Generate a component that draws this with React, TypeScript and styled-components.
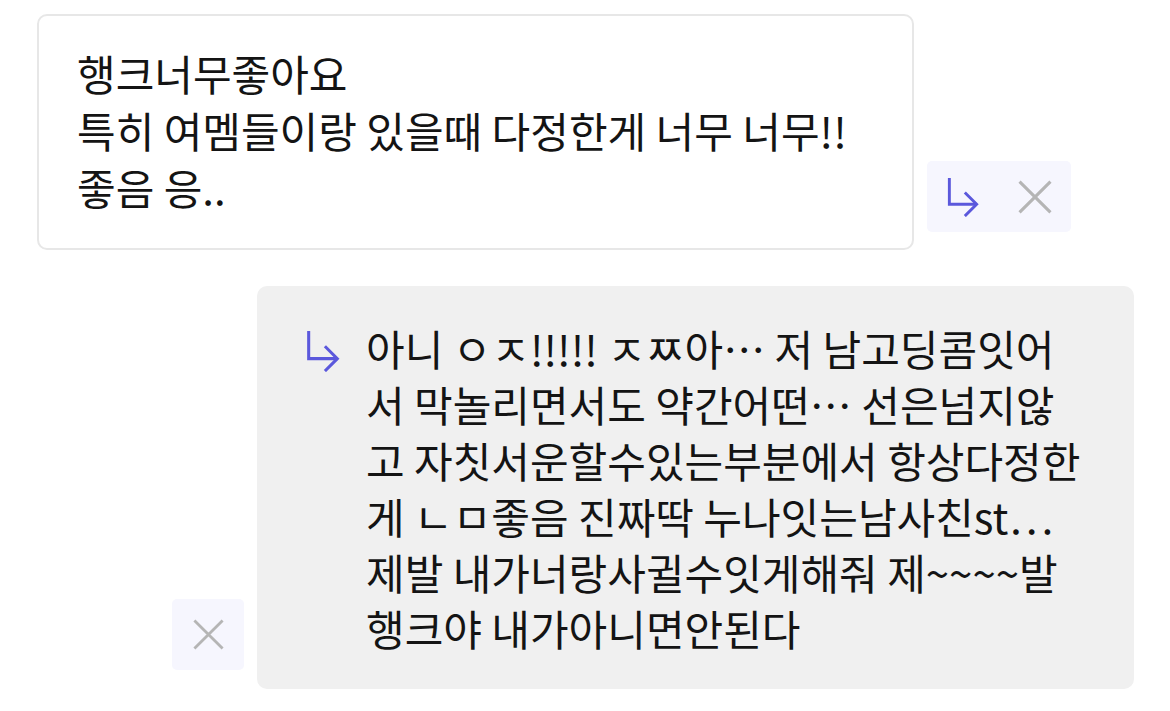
import React from "react";
import styled, { createGlobalStyle } from "styled-components";

const Global = createGlobalStyle`
  html, body { margin: 0; padding: 0; background: #ffffff; }
  body { font-family: "Noto Sans CJK KR", "Noto Sans", sans-serif; color: #141414; }
`;

const Page = styled.div`
  width: 1170px;
  height: 711px;
  box-sizing: border-box;
  padding: 14px 36px 0 37px;
  display: flex;
  flex-direction: column;
  gap: 36px;
`;

const Row = styled.div<{ $mine?: boolean }>`
  display: flex;
  align-items: flex-end;
  gap: 13px;
  justify-content: ${(p) => (p.$mine ? "flex-end" : "flex-start")};
`;

const Bubble = styled.div<{ $mine?: boolean }>`
  width: 877px;
  box-sizing: border-box;
  border-radius: 10px;
  background: ${(p) => (p.$mine ? "#f0f0f0" : "#ffffff")};
  border: ${(p) => (p.$mine ? "none" : "2px solid #e7e7e7")};
  padding: ${(p) => (p.$mine ? "34px 40px 33px 48px" : "28px 40px 33px 38px")};
  display: flex;
  align-items: flex-start;
  gap: 25px;
`;

const Text = styled.div<{ $lh: number }>`
  font-size: 42px;
  line-height: ${(p) => p.$lh}px;
  white-space: nowrap;
`;

const Line = styled.div``;

const ReplyMark = styled.span`
  display: flex;
  flex: none;
  margin-top: 10px;
  color: #5b58dc;
`;

const Actions = styled.div<{ $offset: number }>`
  display: flex;
  background: #f6f6fe;
  border-radius: 5px;
  margin-bottom: ${(p) => p.$offset}px;
  flex: none;
`;

const ActionButton = styled.button<{ $tone: "accent" | "muted" }>`
  width: 72px;
  height: 71px;
  border: none;
  background: transparent;
  padding: 0;
  display: flex;
  align-items: center;
  justify-content: center;
  color: ${(p) => (p.$tone === "accent" ? "#5b58dc" : "#b5b5b5")};
  cursor: pointer;
`;

const ReplyIcon = ({ w = 36, h = 42 }: { w?: number; h?: number }) => (
  <svg width={w} height={h} viewBox="0 0 36 44" fill="none" stroke="currentColor" strokeWidth={3.2} strokeLinecap="butt" strokeLinejoin="miter">
    <path d="M3 1 V30 H33" />
    <path d="M20 17 L33 30 L20 43" />
  </svg>
);

const CloseIcon = ({ s = 33 }: { s?: number }) => (
  <svg width={s} height={s} viewBox="0 0 33 33" fill="none" stroke="currentColor" strokeWidth={3}>
    <path d="M1.5 1.5 L31.5 31.5 M31.5 1.5 L1.5 31.5" />
  </svg>
);

const first = ["행크너무좋아요", "특히 여멤들이랑 있을때 다정한게 너무 너무!!", "좋음 응.."];
const second = [
  "아니 ㅇㅈ!!!!! ㅈㅉ아… 저 남고딩콤잇어",
  "서 막놀리면서도 약간어떤… 선은넘지않",
  "고 자칫서운할수있는부분에서 항상다정한",
  "게 ㄴㅁ좋음 진짜딱 누나잇는남사친st…",
  "제발 내가너랑사귈수잇게해줘 제~~~~발",
  "행크야 내가아니면안된다",
];

export default function App() {
  return (
    <>
      <Global />
      <Page>
        <Row>
          <Bubble>
            <Text $lh={57}>
              {first.map((l) => (
                <Line key={l}>{l}</Line>
              ))}
            </Text>
          </Bubble>
          <Actions $offset={18}>
            <ActionButton $tone="accent" aria-label="reply">
              <ReplyIcon w={34} h={40} />
            </ActionButton>
            <ActionButton $tone="muted" aria-label="close">
              <CloseIcon s={34} />
            </ActionButton>
          </Actions>
        </Row>
        <Row $mine>
          <Actions $offset={19}>
            <ActionButton $tone="muted" aria-label="close">
              <CloseIcon s={31} />
            </ActionButton>
          </Actions>
          <Bubble $mine>
            <ReplyMark>
              <ReplyIcon />
            </ReplyMark>
            <Text $lh={56}>
              {second.map((l) => (
                <Line key={l}>{l}</Line>
              ))}
            </Text>
          </Bubble>
        </Row>
      </Page>
    </>
  );
}
